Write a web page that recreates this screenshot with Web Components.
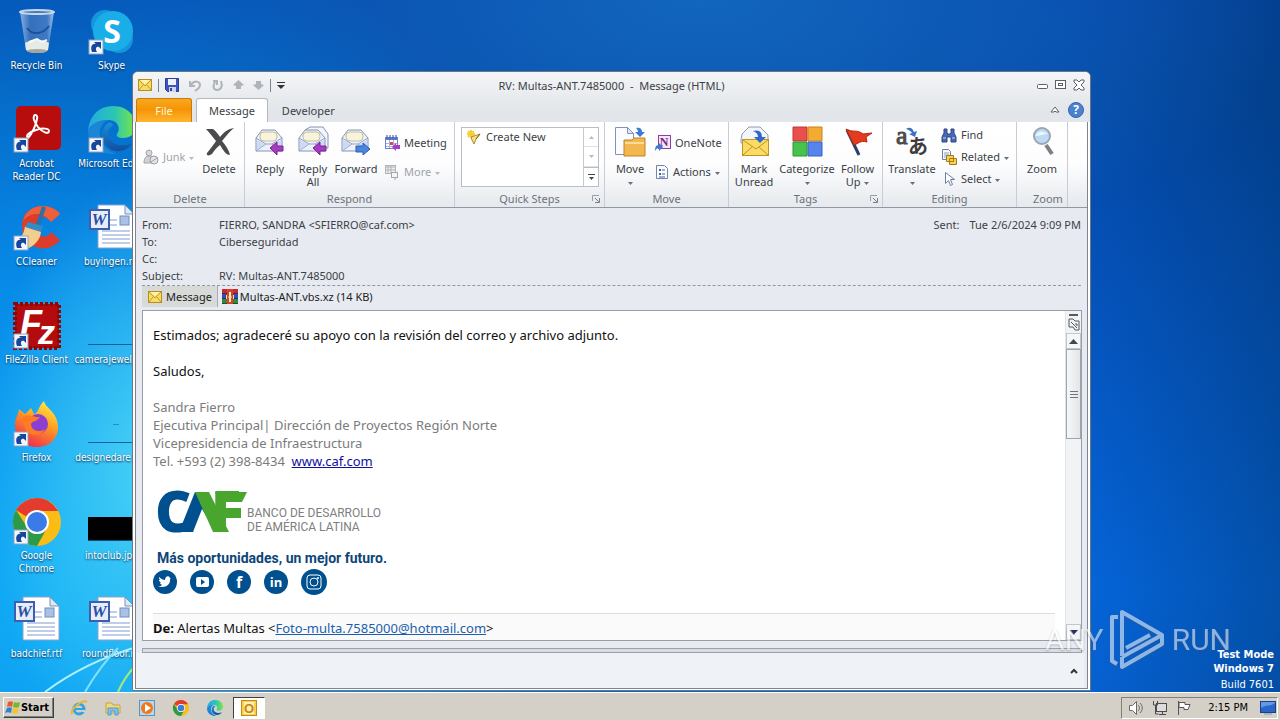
<!DOCTYPE html>
<html lang="en">
<head>
<meta charset="utf-8">
<title>RV: Multas-ANT.7485000 - Message (HTML)</title>
<style>
html, body { margin: 0; height: 100%; overflow: hidden; }
body { font: 11px/13px "Noto Sans", "Open Sans", sans-serif; color: #3b3f46; }
</style>
</head>
<body>
<desktop-shell></desktop-shell>
<script>
const define = (name, css, html, setup) => {
  const template = document.createElement('template');
  template.innerHTML = `<style>*{box-sizing:border-box}button{font:inherit;color:inherit;border:0;background:none;padding:0;margin:0}${css}</style>${html}`;
  customElements.define(name, class extends HTMLElement {
    constructor() {
      super();
      this.attachShadow({ mode: 'open' }).append(template.content.cloneNode(true));
    }
    connectedCallback() { if (setup) setup(this, this.shadowRoot); }
  });
};

const svg = (w, h, body) => `<svg width="${w}" height="${h}" viewBox="0 0 ${w} ${h}" fill="none" aria-hidden="true">${body}</svg>`;
const shortcut = '<rect x="1" y="32" width="14" height="14" fill="#f4f6fa" stroke="#8da2c4"/><path d="M4 44c-2-5 0-9 4-8l-2-2h7v7l-2-2c-3-1-4 2-2 5z" fill="#17479c"/>';
const envelope = '<path d="M2 12 8 4h13l7 8v13H2z" fill="#eef2fb" stroke="#8493b4"/><rect x="6" y="6" width="17" height="9" rx="4" fill="#f7f3dc" stroke="#c5bf9a"/><path d="M2 12l10 6h6l10-6M2 25l10-7M28 25l-10-7" stroke="#8fa2cb"/><path d="M3 14l8 4-8 6zM27 14l-8 4 8 6z" fill="#cddaf5"/>';
const arrowLeft = '<path d="M16 22l7-6v4h6v5h-6v4z" fill="#a63cc0" stroke="#7b2497"/>';
const word = '<path d="M10 1h27l9 9v34H10z" fill="#fff" stroke="#8ba3c9"/><path d="M37 1v9h9z" fill="#dce7f8" stroke="#7891bd"/><path d="M22 16h7M22 21h7M14 27h28M14 31h28M14 35h28M14 39h28" stroke="#7e9bd3"/><rect x="32" y="12" width="9" height="9" fill="#a9c1e4" stroke="#6f8fc5"/><rect x="2" y="6" width="19" height="19" fill="#e7eefb" stroke="#3e5fae" stroke-width="2"/><text x="11" y="21" text-anchor="middle" font-family="Liberation Serif,serif" font-size="17" font-weight="700" font-style="italic" fill="#2c4fa3">W</text>';
const chrome = '<circle cx="24" cy="24" r="24" fill="#f9bd15"/><path d="M3 12A24 24 0 0 1 45 13H24A11 11 0 0 0 14 19z" fill="#e33b2e"/><path d="M3 12A24 24 0 0 0 24 48l10-18A11 11 0 0 1 14 29z" fill="#2c9a48"/><circle cx="24" cy="24" r="12" fill="#fff"/><circle cx="24" cy="24" r="10" fill="#3a7be8"/>';
const edge = '<defs><linearGradient id="e" x1="0" y1="0" x2="1" y2="0"><stop offset="0" stop-color="#24a9e0"/><stop offset=".55" stop-color="#2cc5b5"/><stop offset="1" stop-color="#7be83e"/></linearGradient><linearGradient id="f" x1="0" y1="0" x2="0" y2="1"><stop offset="0" stop-color="#1b8fd9"/><stop offset="1" stop-color="#114fa0"/></linearGradient></defs><path d="M0 24C2 8 12 0 25 0c15 0 23 11 23 20 0 8-6 12-13 12-5 0-7-2-6-4 4-5 1-14-8-14C10 14 3 19 0 24z" fill="url(#e)"/><path d="M0 24c3-6 10-10 20-10-6 3-9 9-8 16 1 9 8 15 16 18C12 49 0 40 0 24z" fill="#1b86d6"/><path d="M20 17c-8 6-8 18 1 25 8 6 18 3 24-5-9 4-24 3-25-9 0-5 3-6 5-9-1-2-3-3-5-2z" fill="url(#f)"/>';
const caret = '<path d="M0 0h5L2.500 3z" fill="#6b7078"/>';

const ICONS = {
  recycle: svg(48, 48, '<defs><linearGradient id="g" x1="0" x2="1"><stop offset="0" stop-color="#a9c6e6"/><stop offset=".3" stop-color="#3f74bb"/><stop offset=".8" stop-color="#4c80c4"/><stop offset="1" stop-color="#c9dcf1"/></linearGradient></defs><path d="M7 4l6 38c5 4 18 4 22 0l6-38z" fill="url(#g)" fill-opacity=".8"/><path d="M12 35l1 7c5 4 18 4 22 0l1-7c-5-4-18-4-24 0z" fill="#e7ebe8"/><ellipse cx="24" cy="43" rx="10" ry="2" fill="#a5a69e"/><path d="M16 34l8-3 5 3 5-2" stroke="#f6fafc" stroke-width="2"/><path d="M14 20c6 8 16 6 22-2" stroke="#1f4e9e" stroke-width="2"/><ellipse cx="24" cy="4" rx="17" ry="2" fill="#4d7ab8" stroke="#c6d8eb" stroke-width="2"/>'),
  skype: svg(48, 48, '<circle cx="17" cy="16" r="14" fill="#1595dc"/><circle cx="31" cy="31" r="14" fill="#1595dc"/><circle cx="25" cy="23" r="20" fill="#1aaee8"/><text x="24" y="35" text-anchor="middle" font-family="Open Sans,sans-serif" font-size="32" font-weight="700" fill="#fff">S</text>' + shortcut),
  acrobat: svg(48, 48, '<rect x="3" y="0" width="45" height="44" rx="5" fill="#b80d0d"/><path d="M15 32c-3-2 1-6 8-8 6-2 13-2 13 1 0 4-7 1-11-4-3-4-5-9-4-11s4-1 3 3c-1 6-5 15-9 19z" stroke="#fff" stroke-width="2"/>' + shortcut),
  edge: svg(48, 48, edge + shortcut),
  ccleaner: svg(48, 48, '<path d="M47 10C38-2 10-1 9 21c0 25 27 30 38 15l-9-8c-4 8-15 5-15-6 0-9 10-12 15-4z" fill="#dc3c2c"/><path d="M47 10C38-2 14-1 10 17c7-9 20-10 28 1z" fill="#f05f3b"/><path d="M31 3l-8 23" stroke="#2d70a7" stroke-width="4"/><path d="M12 22l16 5c0 8-7 16-15 18L1 36c7-1 10-6 11-14z" fill="#f1cd8e"/><path d="M15 18l15 4-2 6-16-5z" fill="#348bc4"/>' + shortcut),
  filezilla: svg(48, 48, '<rect x="2" y="2" width="44" height="44" fill="#b40c0c" stroke="#8e0707" stroke-width="4" stroke-dasharray="3 2"/><text x="7" y="34" font-family="Liberation Sans,sans-serif" font-size="36" font-weight="700" font-style="italic" fill="#fff">F<tspan x="25" y="42" font-size="34">z</tspan></text>' + shortcut),
  firefox: svg(48, 48, '<defs><linearGradient id="o" x1=".8" y1="0" x2=".3" y2="1"><stop offset="0" stop-color="#fff04a"/><stop offset=".45" stop-color="#ff9a21"/><stop offset="1" stop-color="#f0264f"/></linearGradient></defs><path d="M2 25c0-7 3-9 4-16l6 5 6-6 3 6c4 0 5-9 10-13 1 7 14 11 14 26 0 27-43 27-43-2z" fill="url(#o)"/><circle cx="25" cy="24" r="10" fill="#8a3fd0"/><path d="M9 17c8-4 13 1 18 0-2 4-8 4-9 7 0 7 9 9 14 5-3 8-20 9-21-5z" fill="#ff7b24"/>' + shortcut),
  chrome: svg(48, 48, chrome + shortcut),
  word: svg(48, 48, word),
  strip: svg(48, 48, '<path d="M0 42.500h48" stroke="#155f9c"/>'),
  stripdot: svg(48, 48, '<path d="M0 42.500h48" stroke="#155f9c"/><path d="M25 24.500h6" stroke="#1f8fd0"/>'),
  black: svg(48, 48, '<rect y="19" width="48" height="23" fill="#000"/><path d="M0 42.500h48" stroke="#164c78"/>'),

  mailsmall: svg(14, 12, '<rect x=".5" y=".5" width="13" height="11" fill="#f9dc64" stroke="#b58d22"/><path d="M1 1l6 6 6-6M1 11l4-5M13 11L9 6" stroke="#c29a2e"/><path d="M2 1h10L7 5z" fill="#fff3b4"/>'),
  save: svg(14, 14, '<path d="M.5.5h13v13h-11l-2-2z" fill="#3d55bd" stroke="#2b3d96"/><rect x="3" y="1" width="8" height="6" fill="#eef2fc"/><rect x="4" y="9" width="7" height="5" fill="#cdd6ef"/><rect x="5" y="10" width="2" height="3" fill="#3145a4"/>'),
  undo: svg(14, 13, '<path d="M2 2v5h5M3 6c3-5 9-4 9 0 0 3-2 4-5 6" stroke="#b0b3b9" stroke-width="2"/>'),
  redo: svg(13, 13, '<path d="M2 2h4v4M4 3c-3 5-1 8 2 8 4 0 6-4 4-9" stroke="#b0b3b9" stroke-width="2"/>'),
  up: svg(11, 10, '<path d="M5.500 0L11 5 8 6v3H3V6L0 5z" fill="#b0b3b9"/>'),
  down: svg(11, 10, '<path d="M5.500 10L11 5 8 4V1H3v3L0 5z" fill="#b0b3b9"/>'),
  qat: svg(8, 8, '<path d="M0 1.500h8" stroke="#333"/><path d="M0 4h8L4 8z" fill="#333"/>'),
  min: svg(12, 12, '<rect x=".5" y="5.500" width="10" height="4" rx="1" fill="#fff" stroke="#5b6068"/>'),
  max: svg(12, 12, '<rect x=".5" y="1.500" width="10" height="8" fill="#fff" stroke="#5b6068"/><rect x="3.500" y="4.500" width="4" height="2" stroke="#5b6068"/>'),
  close: svg(12, 12, '<path d="M1 1h3l2 2 2-2h3v2L8 6l3 3v2H8L6 9l-2 2H1V9l3-3-3-3z" fill="#fff" stroke="#5b6068"/>'),
  collapse: svg(10, 8, '<path d="M1 6l4-5 4 5H6L5 5 4 6z" fill="#fff" stroke="#5b6068"/>'),
  help: svg(16, 16, '<circle cx="8" cy="8" r="7.500" fill="#4a82cf" stroke="#3465b0"/><text x="8" y="12" text-anchor="middle" font-family="Open Sans,sans-serif" font-size="12" font-weight="700" fill="#fff">?</text>'),

  caret: svg(5, 3, caret),
  caretlight: svg(5, 3, '<path d="M0 0h5L2.500 3z" fill="#b6b9be"/>'),
  junk: svg(16, 16, '<circle cx="6" cy="4" r="3" fill="#d5d7da" stroke="#a0a3a8"/><path d="M1 14c0-5 2-7 5-7s5 3 5 7z" fill="#cfd1d4" stroke="#a0a3a8"/><circle cx="11" cy="11" r="4" fill="#e5e6e8" stroke="#9b9ea3"/><path d="M8 13l6-4" stroke="#9b9ea3"/>'),
  delete: svg(32, 32, '<path d="M3 3h7c3 2 5 5 7 8 5-6 8-8 14-9-5 4-8 8-12 13 4 5 7 9 8 14-4 0-7-5-10-10-4 3-6 6-8 9-3 2-6 2-5-1 4-5 7-9 9-12C9 10 6 6 3 3z" fill="#4a4b4d"/>'),
  reply: svg(32, 32, envelope + arrowLeft),
  replyall: svg(32, 32, '<path d="M8 4l5-3h13l5 7v14h-4z" fill="#f3f6fd" stroke="#8493b4"/>' + envelope + arrowLeft),
  forward: svg(32, 32, envelope + '<path d="M30 23l-7-6v3h-7v6h7v3z" fill="#4b86dd" stroke="#2c5fb5"/>'),
  meeting: svg(16, 16, '<rect x="1.500" y="2.500" width="12" height="11" fill="#fff" stroke="#6a83c9"/><path d="M2 3h11v2H2z" fill="#5c76c6"/><path d="M3 0v3M6 0v3M9 0v3M12 0v3" stroke="#334b9c"/><path d="M2 8.500h11M2 11.500h11M5.500 5v8M9.500 5v8" stroke="#a3b3e0"/><rect x="6" y="7" width="3" height="3" fill="#e24747"/><path d="M8 12l4-4v2h4v4h-4v2z" fill="#a63cc0"/>'),
  more: svg(16, 16, '<rect x="1.500" y="1.500" width="10" height="8" fill="#eee" stroke="#b1b4b8"/><path d="M2 3h9M2 6h9M4 1v8M7 1v8" stroke="#b1b4b8"/><rect x="7.500" y="8.500" width="6" height="5" fill="#f5f5f5" stroke="#a3a6ab"/><path d="M11 14v2" stroke="#a3a6ab"/>'),
  quick: svg(16, 16, '<path d="M5 1v8M1 5h8M2 2l6 6M8 2L2 8" stroke="#f3cf3b" stroke-width="2"/><path d="M5 8l9-3-4 5-2 5-2-4z" fill="#f6e18a" stroke="#b58b28"/><path d="M10 10l4-5" stroke="#7b6230"/>'),
  gup: svg(5, 3, '<path d="M2.500 0L5 3H0z" fill="#b6b9be"/>'),
  gmore: svg(7, 6, '<path d="M0 .5h7" stroke="#444"/><path d="M1 3h5L3.500 6z" fill="#444"/>'),
  launcher: svg(8, 8, '<path d="M.5 6V.5H7" stroke="#9a9ea6"/><path d="M3 3l4 4M7.500 3v4.500H3" stroke="#7b808a"/>'),
  move: svg(32, 32, '<path d="M1.500 1.500h12l6 6v21h-18z" fill="#fbfcff" stroke="#7f93bd"/><path d="M13.500 1.500v6h6z" fill="#dfe7f6" stroke="#7f93bd"/><path d="M10 14h8l2-2h11v18H10z" fill="#f4b64f" stroke="#bf832b"/><path d="M11 17h19" stroke="#fbdc97" stroke-width="2"/><path d="M22 2c5-1 6 2 6 4h3l-5 5-5-5h3c0-2-1-3-2-4z" fill="#3d7ad6"/>'),
  onenote: svg(16, 16, '<rect x="3.500" y=".5" width="12" height="13" fill="#f4e7f6" stroke="#8e3d9d"/><text x="9" y="11" text-anchor="middle" font-family="Liberation Serif,serif" font-size="12" font-weight="700" fill="#7c2289">N</text><path d="M0 16c0-4 1-6 4-6V8l4 4-4 4v-3c-2 0-3 1-4 3z" fill="#3d7ad6"/>'),
  actions: svg(14, 16, '<path d="M1.500 1.500h8l3 3v10h-11z" fill="#fafbff" stroke="#7285ad"/><path d="M4 5h2v2H4zM4 9h2v2H4z" fill="#44609f"/><path d="M7 6h3M7 10h3M4 13h6" stroke="#44609f"/>'),
  unread: svg(32, 32, '<path d="M3 14L4 8l7-7h11l8 8v8H3z" fill="#f2f5fc" stroke="#8b9ab9"/><rect x="4.500" y="13.500" width="26" height="16" fill="#fbdb63" stroke="#bd9428"/><path d="M5 14l13 9 12-9M5 29l9-8M30 29l-9-8" stroke="#bd9428"/><path d="M15 5c7-2 9 2 9 6h4l-6 6-6-6h4c0-3-2-5-5-6z" fill="#2f68cc"/>'),
  categorize: svg(32, 32, '<path d="M2 1h14v14H2z" fill="#ec4d4d" stroke="#c03737"/><path d="M17 1h14v14H17z" fill="#f3ab32" stroke="#c58320"/><path d="M2 16h14v14H2z" fill="#45c34a" stroke="#2f9736"/><path d="M17 16h14v14H17z" fill="#5684ec" stroke="#3b63c1"/>'),
  flag: svg(32, 32, '<path d="M5 4l12 25" stroke="#2c3f6e" stroke-width="3"/><path d="M4 3c7 4 11 0 17 5l9-1-6 4 1 5c-7-2-9 2-13 3z" fill="#e43b1e" stroke="#b5280f"/>'),
  translate: svg(32, 32, '<text x="0" y="18" font-family="Liberation Serif,serif" font-size="26" fill="#4c4c4c" stroke="#4c4c4c">a<tspan x="12" y="28" font-family="Noto Sans CJK JP,sans-serif" font-size="20" font-weight="700" fill="#3e3e3e" stroke="none">あ</tspan></text><path d="M10 3c4-3 7 0 8 3l3-1-2 6-6-3 3-1c-1-2-3-3-6-4z" fill="#3d6fc4"/>'),
  find: svg(16, 14, '<path d="M3 1h3v4l1 1h2l1-1V1h3v4l2 4v5h-5V9H6v5H1V9l2-4z" fill="#4767b0" stroke="#2c448b"/><path d="M2 10h3M11 10h3" stroke="#c6d5f3"/>'),
  related: svg(16, 16, '<path d="M1.500.5h6l2 2v8h-8z" fill="#f8faff" stroke="#6d80ab"/><path d="M3 4h5M3 6h5M3 8h5" stroke="#8aa0cf"/><path d="M5.500 6.500h7v6h-7zM8.500 9.500h7v6h-7z" fill="#f7d34d" stroke="#a37c18"/>'),
  select: svg(16, 16, '<path d="M4.500 1.500v11l3-3 2 5 2-1-2-5h4z" fill="#fff" stroke="#6d7fa8"/>'),
  zoom: svg(32, 32, '<path d="M20 19l6 9" stroke="#7c7f84" stroke-width="4"/><circle cx="16" cy="10" r="8" fill="#bcdaf6" stroke="#9aa5b3" stroke-width="2"/><path d="M9 10c5-7 8-4 13-2-5 0-8 2-13 2z" fill="#ecf6ff"/>'),
  archive: svg(16, 15, '<path d="M0 0h16v5H0z" fill="#8d2d86"/><path d="M0 5h16v5H0z" fill="#2f4fb4"/><path d="M0 10h16v5H0z" fill="#2f8a3b"/><path d="M0 0h5v5H0zM11 0h5v5h-5z" fill="#c22a35"/><path d="M0 4.500h16M0 9.500h16M0 14.500h16" stroke="#222" stroke-opacity=".6"/><path d="M5 0h6v15H5z" fill="#d9402b"/><path d="M7 3h2v10H7z" fill="#f8ecc0"/><path d="M4.500 6v4M11.500 6v4M6 8h4" stroke="#eed890"/>'),
  ruler: svg(12, 14, '<path d="M1 1h4l2 2h4v9H7l-2-3H1z" fill="#eef1f5" stroke="#555a63"/><path d="M3 4l6 6M8 5v2h2" stroke="#555a63"/>'),
  sup: svg(9, 5, '<path d="M4.500 0L9 5H0z" fill="#41454c"/>'),
  sdown: svg(9, 5, '<path d="M4.500 5L9 0H0z" fill="#2f3060"/>'),
  chevup: svg(8, 6, '<path d="M1 5l3-3 3 3" stroke="#333" stroke-width="2"/>'),

  winlogo: svg(16, 16, '<path d="M3 2c2-1 3-1 5 0L7 7C5 6 4 6 2 7z" fill="#ea5a26"/><path d="M9 2c2 1 4 1 6 0l-1 5c-2 1-4 1-6 0z" fill="#76b82e"/><path d="M2 8c2-1 3-1 5 0l-1 5c-2-1-4-1-6 0z" fill="#2d83d4"/><path d="M8 8c2 1 4 1 6 0l-1 5c-2 1-4 1-6 0z" fill="#f7c331"/>'),
  ie: svg(17, 16, '<circle cx="8" cy="9" r="5" stroke="#2fa5e6" stroke-width="3"/><path d="M4 9h9" stroke="#2fa5e6" stroke-width="2"/><path d="M11 11h4" stroke="#d4d0c8" stroke-width="2"/><path d="M1 14C-1 9 12-1 16 2" stroke="#edb72c" stroke-width="2"/>'),
  explorer: svg(16, 16, '<path d="M1 3h6l1 2h7v8H1z" fill="#f3d778" stroke="#c9a243"/><path d="M3 15V8h10v7h-3v-4H6v4z" fill="#7fc3ea" stroke="#529dcc"/>'),
  media: svg(16, 16, '<rect x=".5" y=".5" width="15" height="15" fill="#b9d8ee" stroke="#5c93bf"/><circle cx="8" cy="8" r="6" fill="#f0781a"/><path d="M6 4l6 4-6 4z" fill="#fff"/>'),
  chromesmall: `<svg width="16" height="16" viewBox="0 0 48 48" aria-hidden="true">${chrome}</svg>`,
  edgesmall: `<svg width="16" height="16" viewBox="0 0 48 48" aria-hidden="true">${edge}</svg>`,
  outlook: svg(16, 16, '<rect x=".5" y=".5" width="15" height="15" fill="#f9cf4b" stroke="#c58a15"/><rect x="3" y="2" width="10" height="12" fill="#fff0b5"/><text x="8" y="13" text-anchor="middle" font-family="Liberation Sans,sans-serif" font-size="13" font-weight="700" fill="#c5870d">O</text>'),
  speaker: svg(16, 16, '<path d="M1.500 5.500h3l4-4v13l-4-4h-3z" fill="#fff" stroke="#6a6a6a"/><path d="M10 5c2 2 2 4 0 6M12 3c3 3 3 7 0 10" stroke="#6a6a6a"/>'),
  network: svg(16, 16, '<rect x="4.500" y="3.500" width="10" height="8" fill="#ddd" stroke="#4c4c4c"/><path d="M7 14.500h7M10.500 12v2M1.500 1v4h4V1M3.500 5v9h3" stroke="#4c4c4c"/>'),
  flagtray: svg(16, 16, '<path d="M2.500 1v14" stroke="#555"/><path d="M3 2.500h6v2h5l-2 5H8v-2H3z" fill="#fff" stroke="#555"/>'),
  screen: svg(16, 14, '<rect x=".5" y=".5" width="15" height="11" fill="#2a66c8" stroke="#1d3f84"/><path d="M1 7c5-4 9-1 14-5V1H1z" fill="#5f9be8"/><path d="M4 13h8" stroke="#7a94bd"/>'),

  twitter: svg(24, 24, '<circle cx="12" cy="12" r="12" fill="#00508f"/><path d="M18 8l-1 1c1 6-6 10-12 7 2 0 3 0 4-1-1-1-2-1-2-2h1c-1-1-2-2-2-3h1C6 9 6 8 6 7c2 2 4 3 6 3 0-4 4-5 5-2z" fill="#fff"/>'),
  youtube: svg(24, 24, '<circle cx="12" cy="12" r="12" fill="#00508f"/><rect x="6" y="7" width="13" height="10" rx="2" fill="#fff"/><path d="M11 9l4 3-4 3z" fill="#00508f"/>'),
  facebook: svg(24, 24, '<circle cx="12" cy="12" r="12" fill="#00508f"/><text x="12" y="18" text-anchor="middle" font-family="Open Sans,sans-serif" font-size="16" font-weight="700" fill="#fff">f</text>'),
  linkedin: svg(24, 24, '<circle cx="12" cy="12" r="12" fill="#00508f"/><text x="12" y="17" text-anchor="middle" font-family="Open Sans,sans-serif" font-size="13" font-weight="700" fill="#fff">in</text>'),
  instagram: svg(26, 26, '<circle cx="13" cy="13" r="13" fill="#00508f"/><rect x="6" y="6" width="14" height="14" rx="3" stroke="#fff"/><circle cx="13" cy="13" r="4" stroke="#fff"/><circle cx="17" cy="9" r="1" fill="#fff"/>'),
};

define('ui-icon', ':host{display:inline-flex;flex:none;text-shadow:none}svg{display:block;overflow:visible}', '<span></span>', (el, root) => {
  root.querySelector('span').innerHTML = ICONS[el.getAttribute('name')];
});

define('desktop-icon', `
:host{display:block}
button{display:flex;flex-direction:column;align-items:center;width:100%;padding:8px 0 0;gap:3px;color:#fff;font:10px/13px "DejaVu Sans Condensed","DejaVu Sans",sans-serif;text-shadow:0 1px 2px #024;text-align:center;white-space:nowrap}`,
`<button><ui-icon></ui-icon><span><slot></slot></span></button>`, (el, root) => {
  const icon = document.createElement('ui-icon');
  icon.setAttribute('name', el.getAttribute('icon'));
  root.querySelector('ui-icon').replaceWith(icon);
});

define('ribbon-group', `
:host{display:flex;flex-direction:column;flex:none;border-right:1px solid #c9ccd2;height:85px}
.items{display:flex;flex:1;min-height:0;padding-top:4px}
footer{display:grid;grid-template-columns:16px 1fr 16px;height:16px;text-align:center;align-items:center;color:#6c727c;line-height:14px}
footer span{grid-column:2;white-space:nowrap;justify-self:center}
::slotted([slot=launcher]){justify-self:center}`,
`<div class="items"><slot></slot></div><footer><span></span><slot name="launcher"></slot></footer>`, (el, root) => {
  root.querySelector('span').textContent = el.getAttribute('label');
});

define('ribbon-button', `
:host{display:block;flex:none}
:host([disabled]){color:#a0a3a9}
button{display:flex;flex-direction:column;align-items:center;gap:4px;width:100%;line-height:13px;text-align:center}
:host([small]) button{flex-direction:row;gap:4px;line-height:22px;height:22px;width:auto;white-space:nowrap}
::slotted(ui-icon){vertical-align:middle;margin-left:1px}`,
`<button><ui-icon></ui-icon><span><slot></slot></span></button>`, (el, root) => {
  const icon = document.createElement('ui-icon');
  icon.setAttribute('name', el.getAttribute('icon'));
  root.querySelector('ui-icon').replaceWith(icon);
  root.querySelector('button').disabled = el.hasAttribute('disabled');
});

define('title-bar', `
:host{display:grid;grid-template-columns:1fr auto 1fr;align-items:center;height:26px;padding:0 2px}
.quick,.controls{display:flex;align-items:center;gap:9px}
.controls{justify-content:flex-end;gap:6px}
button{display:flex}
i{width:1px;height:13px;background:#7d828b;margin:0 -3px}
h1{margin:0;font:inherit;white-space:pre}`,
`<div class="quick"><ui-icon name="mailsmall"></ui-icon><i></i><button aria-label="Save"><ui-icon name="save"></ui-icon></button><button aria-label="Undo"><ui-icon name="undo"></ui-icon></button><button aria-label="Repeat"><ui-icon name="redo"></ui-icon></button><button aria-label="Previous item"><ui-icon name="up"></ui-icon></button><button aria-label="Next item"><ui-icon name="down"></ui-icon></button><i></i><button aria-label="Customize toolbar"><ui-icon name="qat"></ui-icon></button></div>
<h1>RV: Multas-ANT.7485000  -  Message (HTML)</h1>
<div class="controls"><button aria-label="Minimize"><ui-icon name="min"></ui-icon></button><button aria-label="Maximize"><ui-icon name="max"></ui-icon></button><button aria-label="Close"><ui-icon name="close"></ui-icon></button></div>`);

define('tab-strip', `
:host{display:flex;height:24px;padding-right:3px;align-items:stretch}
button{padding:0 12px}
.file{width:56px;color:#fff6dc;border:1px solid #c67a10;border-bottom:0;border-radius:3px 3px 0 0;background:linear-gradient(#f9a91d,#f59406 45%,#ffb52d);margin-right:4px}
.on{background:#fff;border:1px solid #b4b8bf;border-bottom:0;border-radius:3px 3px 0 0;margin-right:2px}
.end{margin-left:auto;display:flex;align-items:center;gap:8px}.end button{padding:0;display:flex}`,
`<button class="file">File</button><button class="on">Message</button><button>Developer</button><div class="end"><button aria-label="Collapse ribbon"><ui-icon name="collapse"></ui-icon></button><button aria-label="Help"><ui-icon name="help"></ui-icon></button></div>`);

define('ribbon-bar', `
:host{display:flex;height:86px;background:linear-gradient(#fff,#fdfdfe 50%,#e6e9ed);border-bottom:1px solid #9298a2;overflow:hidden}
.col{display:flex;flex-direction:column;align-items:flex-start}
.junk{width:60px;padding:20px 0 0 7px}
.respond{padding:6px 0 0 3px;gap:7px}
.gallery{display:grid;grid-template-columns:1fr 15px;width:138px;height:60px;margin:1px 0 0 6px;border:1px solid #b9bdc5;background:#fff}
.gallery ribbon-button{padding-left:4px;margin-top:-2px}
.arrows{display:grid;grid-template-rows:1fr 1fr 1fr;border-left:1px solid #c5c8cf}
.arrows button{display:grid;place-items:center;border-bottom:1px solid #dfe1e5}
.arrows button:last-child{border:0;border-top:1px solid #b9bdc5}`,
`<ribbon-group label="Delete" style="width:109px"><div class="col junk"><ribbon-button small disabled icon="junk">Junk <ui-icon name="caretlight"></ui-icon></ribbon-button></div><ribbon-button icon="delete" style="width:46px">Delete</ribbon-button></ribbon-group>
<ribbon-group label="Respond" style="width:210px"><ribbon-button icon="reply" style="width:50px">Reply</ribbon-button><ribbon-button icon="replyall" style="width:36px">Reply<br>All</ribbon-button><ribbon-button icon="forward" style="width:50px">Forward</ribbon-button><div class="col respond"><ribbon-button small icon="meeting">Meeting</ribbon-button><ribbon-button small disabled icon="more">More <ui-icon name="caretlight"></ui-icon></ribbon-button></div></ribbon-group>
<ribbon-group label="Quick Steps" style="width:150px"><div class="gallery"><ribbon-button small icon="quick">Create New</ribbon-button><div class="arrows"><button aria-label="Previous row"><ui-icon name="gup"></ui-icon></button><button aria-label="Next row"><ui-icon name="caretlight"></ui-icon></button><button aria-label="More quick steps"><ui-icon name="gmore"></ui-icon></button></div></div><ui-icon slot="launcher" name="launcher"></ui-icon></ribbon-group>
<ribbon-group label="Move" style="width:124px"><ribbon-button icon="move" style="width:50px">Move<br><ui-icon name="caret"></ui-icon></ribbon-button><div class="col respond" style="padding-left:0"><ribbon-button small icon="onenote">OneNote</ribbon-button><ribbon-button small icon="actions">Actions <ui-icon name="caret"></ui-icon></ribbon-button></div></ribbon-group>
<ribbon-group label="Tags" style="width:154px"><ribbon-button icon="unread" style="width:50px">Mark<br>Unread</ribbon-button><ribbon-button icon="categorize" style="width:56px">Categorize<br><ui-icon name="caret"></ui-icon></ribbon-button><ribbon-button icon="flag" style="width:45px">Follow<br>Up <ui-icon name="caret"></ui-icon></ribbon-button><ui-icon slot="launcher" name="launcher"></ui-icon></ribbon-group>
<ribbon-group label="Editing" style="width:134px"><ribbon-button icon="translate" style="width:58px">Translate<br><ui-icon name="caret"></ui-icon></ribbon-button><div class="col" style="margin-top:-2px"><ribbon-button small icon="find">Find</ribbon-button><ribbon-button small icon="related">Related <ui-icon name="caret"></ui-icon></ribbon-button><ribbon-button small icon="select">Select <ui-icon name="caret"></ui-icon></ribbon-button></div></ribbon-group>
<ribbon-group label="Zoom" style="width:51px"><ribbon-button icon="zoom" style="width:50px">Zoom</ribbon-button></ribbon-group>`);

define('message-header', `
:host{display:block;padding:8px 2px 0 6px}
dl{display:grid;grid-template-columns:77px 1fr auto 36px auto;margin:0;line-height:17px;padding-bottom:1px;border-bottom:1px dashed #9298a2}
dt,dd{margin:0;white-space:nowrap}
dd:not(.date){grid-column:2}dt:not(.sent){grid-column:1}
.sent,.date{grid-row:1}.sent{grid-column:4}.date{grid-column:5}
.files{display:flex;gap:4px;padding-bottom:3px;color:#222}
button{display:flex;align-items:center;gap:4px;height:21px}
.on{background:#d8dad8;border-right:1px solid #a8acb4;padding:0 5px 0 6px}`,
`<dl><dt>From:</dt><dd>FIERRO, SANDRA &lt;SFIERRO@caf.com&gt;</dd><dt>To:</dt><dd>Ciberseguridad</dd><dt>Cc:</dt><dd></dd><dt>Subject:</dt><dd>RV: Multas-ANT.7485000</dd><dt class="sent">Sent:</dt><dd class="date">Tue 2/6/2024 9:09 PM</dd></dl>
<div class="files"><button class="on"><ui-icon name="mailsmall"></ui-icon>Message</button><button style="gap:2px"><ui-icon name="archive"></ui-icon>Multas-ANT.vbs.xz (14 KB)</button></div>`);

define('scroll-bar', `
:host{display:flex;flex-direction:column;width:16px;background:#f2f3f5;border-left:1px solid #e2e4e8}
button{display:grid;place-items:center;flex:none}
.split{height:5px;border-bottom:2px solid #555a63;width:9px;margin:0 auto}
.ruler{height:17px}
.arrow{height:16px;border:1px solid #c2c6cd;background:#f5f6f8}
.thumb{height:90px;border:1px solid #9fa4ad;background:linear-gradient(90deg,#f6f7f8,#e3e5e8);display:grid;justify-items:center;align-content:center;gap:2px}
.thumb i{width:8px;height:1px;background:#6e737c}
.arrow:last-child{margin-top:auto}`,
`<div class="split"></div><button class="ruler" aria-label="Ruler"><ui-icon name="ruler"></ui-icon></button><button class="arrow" aria-label="Scroll up"><ui-icon name="sup"></ui-icon></button><div class="thumb"><i></i><i></i><i></i></div><button class="arrow" aria-label="Scroll down"><ui-icon name="sdown"></ui-icon></button>`);

define('caf-signature', `
:host{display:block;padding-top:18px}
.logo{display:flex;align-items:flex-end;padding-left:4px}
.logo svg{display:block;overflow:visible}
.name{font:12px/14px Roboto,sans-serif;color:#808080;white-space:nowrap}
.tag{margin:14px 0 0;padding-left:4px;font:bold 14px/20px Roboto,sans-serif;color:#0d4679}
.social{display:flex;align-items:center;gap:13px;padding-top:1px}.social a{display:flex}`,
`<div class="logo"><svg width="90" height="46" viewBox="0 0 90 46" role="img" aria-label="CAF"><g font-family="Noto Sans,sans-serif" font-size="56" font-weight="900"><text x="-2" y="44" fill="#00508f">C</text><path d="M22 44 38 4h13v27l-6-10-9 23z" fill="#00508f"/><text x="54" y="44" fill="#48a62f">F</text><path d="M38 4h14l20 40H56z" fill="#48a62f"/><path d="M58 4h32l-5 10H62zM62 20h22v10H66z" fill="#48a62f"/></g></svg><div class="name">BANCO DE DESARROLLO<br>DE AMÉRICA LATINA</div></div>
<p class="tag">Más oportunidades, un mejor futuro.</p>
<div class="social"><a href="#twitter" aria-label="Twitter"><ui-icon name="twitter"></ui-icon></a><a href="#youtube" aria-label="YouTube"><ui-icon name="youtube"></ui-icon></a><a href="#facebook" aria-label="Facebook"><ui-icon name="facebook"></ui-icon></a><a href="#linkedin" aria-label="LinkedIn"><ui-icon name="linkedin"></ui-icon></a><a href="#instagram" aria-label="Instagram"><ui-icon name="instagram"></ui-icon></a></div>`);

define('message-body', `
:host{display:flex;flex:1;min-height:0;margin:0 1px 0 6px;border:1px solid #989da8;background:#fff;overflow:hidden}
article{flex:1;min-width:0;overflow:hidden;padding:15px 10px 0;font-size:13px;line-height:18px;color:#111}
p{margin:0 0 18px}.sign{margin:0;color:#7b7b7b}
a{color:#10109c}
.quoted{margin:18px 0 0;padding:5px 0 8px;border-top:1px solid #dcdcdc;background:#fafafa}.quoted a{color:#1b5fae}`,
`<article><p>Estimados; agradeceré su apoyo con la revisión del correo y archivo adjunto.</p><p>Saludos,</p><p class="sign">Sandra Fierro<br>Ejecutiva Principal| Dirección de Proyectos Región Norte<br>Vicepresidencia de Infraestructura<br>Tel. +593 (2) 398-8434&nbsp; <a href="#caf">www.caf.com</a></p><caf-signature></caf-signature><p class="quoted"><b>De:</b> Alertas Multas &lt;<a href="#mail">Foto-multa.7585000@hotmail.com</a>&gt;</p></article><scroll-bar></scroll-bar>`);

define('people-pane', `
:host{display:block;padding:7px 1px 0 6px}
.split{height:5px;border:1px solid #9ba0aa;background:#d8dce4}
.pane{display:flex;height:35px;align-items:center;justify-content:flex-end;margin:0 -2px 0 -6px;padding-right:6px;background:#eff3f7}
button{display:flex}`,
`<div class="split"></div><div class="pane"><button aria-label="Expand people pane"><ui-icon name="chevup"></ui-icon></button></div>`);

define('message-window', `
:host{display:flex;flex-direction:column;border:1px solid #6e7480;border-radius:6px 6px 0 0;background:#fff;padding:0 2px 1px;overflow:hidden}
.frame{background:linear-gradient(#f3f5f7,#e2e5e9 40px);margin:0 -2px;padding:0 3px}
.content{flex:1;min-height:0;display:flex;flex-direction:column;background:#e7ebf1;border:1px solid #7f858f;border-top:0;padding-right:4px}
ribbon-bar{margin-right:-4px}`,
`<div class="frame"><title-bar></title-bar><tab-strip></tab-strip></div><div class="content"><ribbon-bar></ribbon-bar><message-header></message-header><message-body></message-body><people-pane></people-pane></div>`);

define('task-bar', `
:host{display:flex;align-items:center;height:28px;padding:2px 2px 0 3px;background:#d4d0c8;border-top:1px solid #fff;font:11px/13px "DejaVu Sans Condensed","DejaVu Sans",sans-serif;color:#000}
button{display:flex;align-items:center;justify-content:center}
.start{width:51px;height:21px;font-weight:bold;border:1px solid;border-color:#fff #404040 #404040 #fff;box-shadow:inset -1px -1px #808080;padding-right:3px}
.apps{display:flex;margin-left:8px}.apps button{width:34px;height:22px}
.apps .on{width:32px;border:1px solid;border-color:#404040 #fff #fff #404040;background:#fff;margin-left:1px}
.tray{margin-left:auto;display:flex;align-items:center;height:22px;border:1px solid;border-color:#808080 #fff #fff #808080;padding:0 1px 0 6px;gap:8px}
time{margin:0 4px 0 8px}`,
`<button class="start"><ui-icon name="winlogo"></ui-icon>Start</button><div class="apps"><button aria-label="Internet Explorer"><ui-icon name="ie"></ui-icon></button><button aria-label="Explorer"><ui-icon name="explorer"></ui-icon></button><button aria-label="Media Player"><ui-icon name="media"></ui-icon></button><button aria-label="Chrome"><ui-icon name="chromesmall"></ui-icon></button><button aria-label="Edge"><ui-icon name="edgesmall"></ui-icon></button><button class="on" aria-label="Outlook"><ui-icon name="outlook"></ui-icon></button></div>
<div class="tray"><ui-icon name="speaker"></ui-icon><ui-icon name="network"></ui-icon><ui-icon name="flagtray"></ui-icon><time>2:15 PM</time><ui-icon name="screen"></ui-icon></div>`);

define('run-watermark', `
:host{display:flex;align-items:center;gap:6px;opacity:.55;pointer-events:none;color:#fff;font:30px/60px Roboto,sans-serif;filter:drop-shadow(0 1px 1px #555a)}
svg{display:block}`,
`<span>ANY</span><svg width="56" height="62" viewBox="0 0 56 62" fill="none" stroke="#fff" stroke-width="4" stroke-linejoin="round" aria-hidden="true"><path d="M12 47V3l40 23-40 22"/><path d="M8 8H2v44l5 3"/><path d="M16 39l24-13M12 48v10l40-23v-9"/></svg><span>RUN</span>`);

define('desktop-shell', `
:host{display:grid;grid-template-rows:1fr auto;height:100vh;overflow:hidden}
.desktop{position:relative;min-height:0;overflow:hidden;background:
radial-gradient(ellipse 180px 300px at 160px 470px,#4bd5f7,#4bd5f700),
radial-gradient(ellipse 560px 720px at 60px 600px,#12aef6 0,#0798f2cc 45%,#0066d800 100%),
radial-gradient(ellipse 620px 260px at 700px 0,#1266bd,#1266bd00),
linear-gradient(90deg,#00306000 84%,#00306066),
linear-gradient(#0546ab,#0449a8 12%,#0553bd 40%,#0566dc 85%,#0662d4)}
.rays{position:absolute;left:0;bottom:0}
.icons{display:grid;grid-template-rows:repeat(7,98px);grid-template-columns:75px 75px;grid-auto-flow:column;width:150px;margin-left:-1px}
message-window{position:absolute;left:132px;right:189px;top:71px;bottom:1px}
.build{position:absolute;right:6px;bottom:-1px;text-align:right;color:#fff;font:11px/17px "DejaVu Sans Condensed","DejaVu Sans",sans-serif}
.build b{display:block;line-height:14px}
run-watermark{position:absolute;right:49px;bottom:21px}`,
`<div class="desktop"><svg class="rays" width="140" height="70" viewBox="0 0 140 70" fill="none" aria-hidden="true"><path d="M45 70Q85 40 140 24" stroke="#aef0fd" stroke-width="2"/><path d="M85 70Q100 44 118 26" stroke="#7fe2f8" stroke-width="2"/><path d="M118 70Q124 56 135 44" stroke="#a4ea7a" stroke-width="2"/></svg>
<nav class="icons">
<desktop-icon icon="recycle">Recycle Bin</desktop-icon><desktop-icon icon="acrobat">Acrobat<br>Reader DC</desktop-icon><desktop-icon icon="ccleaner">CCleaner</desktop-icon><desktop-icon icon="filezilla">FileZilla Client</desktop-icon><desktop-icon icon="firefox">Firefox</desktop-icon><desktop-icon icon="chrome">Google<br>Chrome</desktop-icon><desktop-icon icon="word">badchief.rtf</desktop-icon>
<desktop-icon icon="skype">Skype</desktop-icon><desktop-icon icon="edge">Microsoft Edge</desktop-icon><desktop-icon icon="word">buyingen.rtf</desktop-icon><desktop-icon icon="strip">camerajewel.jpg</desktop-icon><desktop-icon icon="stripdot">designedare.jpg</desktop-icon><desktop-icon icon="black">intoclub.jpg</desktop-icon><desktop-icon icon="word">roundfloor.rtf</desktop-icon>
</nav>
<message-window></message-window>
<run-watermark></run-watermark>
<div class="build"><b>Test Mode</b><b>Windows 7</b>Build 7601</div></div>
<task-bar></task-bar>`);
</script>
</body>
</html>
